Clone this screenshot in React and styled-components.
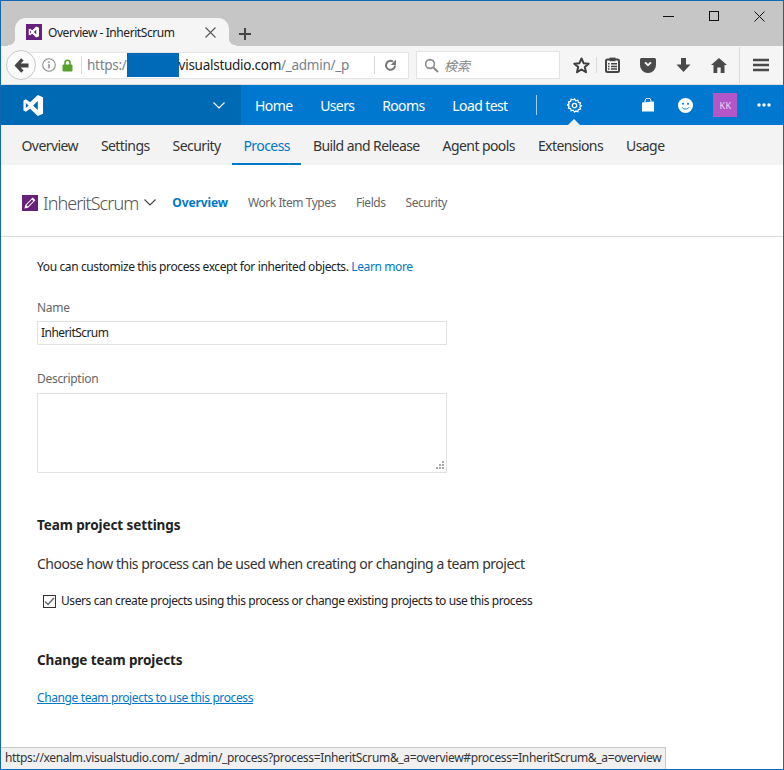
import React from "react";
import styled, { createGlobalStyle } from "styled-components";

const Global = createGlobalStyle`
  html, body { margin: 0; padding: 0; background: #fff; }
  * { box-sizing: border-box; }
`;
const FONT = `"Noto Sans", "Open Sans", sans-serif`;

const Frame = styled.div`
  position: relative; width: 784px; height: 770px; overflow: hidden;
  border: 1px solid #1168b0; background: #fff; font-family: ${FONT}; color: #333;
  display: flex; flex-direction: column;
`;
const TitleBar = styled.div`
  height: 45px; background: #c6c6c6; display: flex; align-items: flex-end; padding-left: 14px; position: relative; flex: none;
`;
const Tab = styled.div`
  position: relative; width: 214px; height: 28px; background: #f5f5f5; border-radius: 11px 11px 0 0;
  display: flex; align-items: center; padding: 0 0 0 11px; gap: 6px;
  &::before, &::after {
    content: ""; position: absolute; bottom: 0; width: 7px; height: 8px;
  }
  &::before { left: -7px; background: radial-gradient(circle at 0 0, transparent 7px, #f5f5f5 7.5px); }
  &::after { right: -7px; background: radial-gradient(circle at 100% 0, transparent 7px, #f5f5f5 7.5px); }
`;
const TabTitle = styled.span`
  font-size: 12px; letter-spacing: -0.43px; color: #222; flex: 1; white-space: nowrap;
`;
const NewTab = styled.div`
  margin: 0 0 3px 10px; width: 14px; height: 18px; display: flex; align-items: center;
`;
const WinControls = styled.div`
  position: absolute; right: 0; top: 0; height: 30px; display: flex; align-items: center; gap: 35px; padding-right: 18px;
`;
const Toolbar = styled.div`
  height: 39px; background: #f5f5f5; display: flex; align-items: center; padding-left: 5px; flex: none; border-bottom: 1px solid #dcdcdc;
`;
const BackBtn = styled.div`
  width: 30px; height: 30px; border-radius: 50%; background: #fbfbfb; border: 1px solid #c8c8c8;
  display: flex; align-items: center; justify-content: center; flex: none; z-index: 1;
`;
const UrlBar = styled.div`
  margin-left: -6px; width: 379px; height: 27px; background: #fff; border: 1px solid #e4e4e4; border-left: none;
  display: flex; align-items: center; padding-left: 12px; flex: none;
`;
const UrlDivider = styled.div`
  width: 1px; height: 18px; background: #d8d8d8; flex: none; margin: ${p => p.$m || "0"};
`;
const UrlText = styled.span`
  font-size: 13.5px; color: ${p => p.$dim ? "#7a7f8c" : "#222"}; white-space: nowrap; letter-spacing: -0.27px;
`;
const Mask = styled.span`
  display: inline-block; width: 52px; height: 24px; background: #0069b8; flex: none;
`;
const SearchBox = styled.div`
  margin-left: 7px; width: 144px; height: 28px; background: #fff; border: 1px solid #e4e4e4;
  display: flex; align-items: center; padding-left: 7px; gap: 5px; flex: none;
`;
const SearchText = styled.span`
  font-family: "Noto Sans CJK JP", sans-serif; font-style: italic; font-size: 13px; color: #888;
`;
const ToolIcons = styled.div`
  display: flex; align-items: center; flex: 1; height: 100%; padding-left: 13px; color: #4a4a4a;
`;
const ToolIcon = styled.div`
  width: ${p => p.$w}px; display: flex; justify-content: flex-start; align-items: center; flex: none;
`;
const ToolSep = styled.div`
  width: 1px; height: ${p => p.$h}px; background: #dadada; flex: none; margin-right: ${p => p.$r}px;
`;
const NavBar = styled.div`
  height: 40px; background: #0078d0; display: flex; align-items: center; flex: none; color: #fff;
`;
const Brand = styled.div`
  width: 240px; height: 100%; background: #0069b4; display: flex; align-items: center; justify-content: space-between;
  padding: 0 16px 0 22px; flex: none;
`;
const NavLinks = styled.div`
  display: flex; align-items: center; padding-left: 14px; gap: 27.7px;
`;
const NavLink = styled.a`
  font-size: 14px; letter-spacing: -0.6px; color: #fff; white-space: nowrap;
`;
const NavRight = styled.div`
  display: flex; align-items: center; height: 100%; position: relative;
`;
const NavSep = styled.div`
  width: 1px; height: 20px; background: #9fd0f0; margin-left: 28.9px;
`;
const NavIcon = styled.div`
  display: flex; align-items: center; justify-content: center; flex: none; margin-left: ${p => p.$l}px; width: ${p => p.$w}px; height: 100%; position: relative;
`;
const Caret = styled.div`
  position: absolute; bottom: 0; left: 50%; margin-left: -6px; width: 0; height: 0;
  border-left: 6px solid transparent; border-right: 6px solid transparent; border-bottom: 6px solid #f3f3f3;
`;
const Avatar = styled.div`
  width: 24px; height: 24px; background: #b455c8; color: #eadcf0; font-size: 9px; display: flex; align-items: center; justify-content: center; flex: none;
  margin-left: 18px; letter-spacing: 0.4px;
`;
const SubNav = styled.div`
  height: 40px; background: #f3f3f3; display: flex; padding-left: 9px; flex: none;
`;
const SubItem = styled.a`
  height: 40px; padding: 11px 11.5px 0; font-size: 14px; letter-spacing: -0.58px; line-height: 20px; white-space: nowrap;
  color: ${p => p.$on ? "#0078c8" : "#333"};
  border-bottom: 2px solid ${p => p.$on ? "#0078c8" : "transparent"};
`;
const ProcHeader = styled.div`
  height: 72px; border-bottom: 1px solid #dcdcdc; display: flex; align-items: center; padding: 4px 0 0 21px; flex: none;
`;
const ProcTitle = styled.span`
  font-size: 18px; font-weight: 300; letter-spacing: -0.95px; color: #555; margin-left: 5px; white-space: nowrap;
`;
const ProcLinks = styled.div`
  display: flex; align-items: center; gap: 20px; margin-left: 16px;
`;
const ProcLink = styled.a`
  font-size: 12px; letter-spacing: ${p => p.$on ? "-0.1px" : "-0.45px"}; white-space: nowrap; font-weight: ${p => p.$on ? 700 : 400}; color: ${p => p.$on ? "#0078c8" : "#666"};
`;
const Content = styled.div`
  padding: 21px 0 0 36px; display: flex; flex-direction: column; flex: 1;
`;
const Text12 = styled.p`
  margin: ${p => p.$t || 0}px 0 0; font-size: 12px; line-height: 18px; letter-spacing: -0.39px; color: #222;
`;
const CheckLabel = styled(Text12)`
  letter-spacing: -0.41px;
`;
const Link = styled.a`
  color: #0078c8; text-decoration: ${p => p.$u ? "underline" : "none"};
`;
const FieldLabel = styled.label`
  display: block; font-size: 12px; line-height: 18px; letter-spacing: -0.3px; color: #666; margin-top: ${p => p.$t}px;
`;
const TextInput = styled.div`
  margin-top: 4px; width: 410px; height: 24px; border: 1px solid #e2e2e2; font-size: 12px; letter-spacing: -0.55px; line-height: 22px; padding-left: 3px; color: #222;
`;
const TextArea = styled.div`
  margin-top: 5px; width: 410px; height: 80px; border: 1px solid #e2e2e2; position: relative;
`;
const Grip = styled.svg`
  position: absolute; right: 2px; bottom: 2px;
`;
const Heading = styled.h2`
  margin: ${p => p.$t}px 0 0; font-size: 13.5px; line-height: 20px; font-weight: 700; letter-spacing: -0.1px; color: #222;
`;
const Lead = styled.p`
  margin: 19px 0 0; font-size: 14px; line-height: 20px; letter-spacing: -0.475px; color: #333;
`;
const CheckRow = styled.div`
  display: flex; align-items: center; gap: 5px; margin: 18px 0 0 6px;
`;
const CheckBox = styled.div`
  width: 13px; height: 13px; border: 1px solid #333; display: flex; align-items: center; justify-content: center; flex: none;
`;
const StatusBar = styled.div`
  position: absolute; left: 0; bottom: 0; width: 665px; height: 22px; background: #f0f0f0; border-top: 1px solid #c8c8c8; border-right: 1px solid #c8c8c8;
  font-size: 12px; letter-spacing: -0.355px; line-height: 20px; padding-left: 4px; color: #333; white-space: nowrap; overflow: hidden;
`;

const VS_PATH = "M15.5 0L21 2.4V19.6L15.5 22L7.5 14.3L3 17.6L0.5 16.3V5.7L3 4.4L7.5 7.7ZM15.5 6.3L10.6 11L15.5 15.7ZM3 8.3V13.7L5.8 11Z";

export default function App() {
  return (
    <Frame>
      <Global />
      <TitleBar>
        <Tab>
          <svg width="16" height="16" viewBox="0 0 16 16" style={{ flex: "none" }}>
            <rect width="16" height="16" fill="#68217a" />
            <g transform="translate(2.5 2.5) scale(0.5)"><path fillRule="evenodd" fill="#fff" d={VS_PATH} /></g>
          </svg>
          <TabTitle>Overview - InheritScrum</TabTitle>
          <svg width="11" height="11" viewBox="0 0 11 11" style={{ marginRight: 13, flex: "none" }}><path d="M0.5 0.5L10.5 10.5M10.5 0.5L0.5 10.5" stroke="#555" strokeWidth="1.1" /></svg>
        </Tab>
        <NewTab>
          <svg width="12" height="12" viewBox="0 0 12 12"><path d="M6 0V12M0 6H12" stroke="#444" strokeWidth="2" /></svg>
        </NewTab>
        <WinControls>
          <svg width="11" height="10" viewBox="0 0 11 10"><path d="M0 5.5H11" stroke="#111" strokeWidth="1" /></svg>
          <svg width="10" height="10" viewBox="0 0 10 10"><rect x="0.5" y="0.5" width="9" height="9" fill="none" stroke="#111" strokeWidth="1" /></svg>
          <svg width="11" height="11" viewBox="0 0 11 11"><path d="M0.5 0.5L10.5 10.5M10.5 0.5L0.5 10.5" stroke="#111" strokeWidth="1" /></svg>
        </WinControls>
      </TitleBar>
      <Toolbar>
        <BackBtn>
          <svg width="15" height="15" viewBox="0 0 15 15"><path d="M7.2 0.3L0.5 7.5L7.2 14.7L9.6 12.6L6.7 9.4H14.5V5.6H6.7L9.6 2.4Z" fill="#454545" /></svg>
        </BackBtn>
        <UrlBar>
          <svg width="14" height="14" viewBox="0 0 14 14" style={{ flex: "none" }}>
            <circle cx="7" cy="7" r="6.3" fill="none" stroke="#8a8a8a" strokeWidth="1.1" />
            <path d="M7 6V10.5M7 3.2V5" stroke="#8a8a8a" strokeWidth="1.4" />
          </svg>
          <svg width="11" height="13" viewBox="0 0 11 13" style={{ marginLeft: 6, flex: "none" }}>
            <path d="M3 6V3.8a2.5 2.5 0 0 1 5 0V6" fill="none" stroke="#57a12c" strokeWidth="1.6" />
            <rect x="0.5" y="5.5" width="10" height="7" rx="1" fill="#57a12c" />
          </svg>
          <UrlDivider $m="0 5px 0 8px" />
          <UrlText $dim>https:/</UrlText>
          <Mask />
          <UrlText>visualstudio.com</UrlText>
          <UrlText $dim>/_admin/_p</UrlText>
          <UrlDivider $m="0 0 0 25px" />
          <svg width="13" height="13" viewBox="0 0 13 13" style={{ marginLeft: 9, flex: "none" }}>
            <path d="M11 6.5A4.5 4.5 0 1 1 9 2.6" fill="none" stroke="#777" strokeWidth="2" />
            <path d="M12 0.5V6H6.8Z" fill="#777" />
          </svg>
        </UrlBar>
        <SearchBox>
          <svg width="15" height="15" viewBox="0 0 15 15"><circle cx="6" cy="6" r="4.4" fill="none" stroke="#8a8a8a" strokeWidth="1.6" /><path d="M9.5 9.5L14 14" stroke="#8a8a8a" strokeWidth="2" /></svg>
          <SearchText>検索</SearchText>
        </SearchBox>
        <ToolIcons>
          <ToolIcon $w={23}>
            <svg width="17" height="17" viewBox="0 0 17 17"><path d="M8.5 1.5L10.6 6.2L15.7 6.7L11.8 10.1L13 15.2L8.5 12.5L4 15.2L5.2 10.1L1.3 6.7L6.4 6.2Z" fill="none" stroke="#3e3e3e" strokeWidth="2" strokeLinejoin="round" /></svg>
          </ToolIcon>
          <ToolSep $h={16} $r={8} />
          <ToolIcon $w={35}>
            <svg width="15" height="16" viewBox="0 0 15 16"><rect x="1" y="2.6" width="13" height="12.4" rx="1.5" fill="none" stroke="#454545" strokeWidth="2" /><path d="M4.5 0.6H10.5V4.2H4.5Z" fill="#454545" /><path d="M3 6.8H4.5M6 6.8H12M3 9.4H4.5M6 9.4H12M3 12H4.5M6 12H12" stroke="#454545" strokeWidth="1.5" /></svg>
          </ToolIcon>
          <ToolIcon $w={36}>
            <svg width="16" height="15" viewBox="0 0 16 15"><path fillRule="evenodd" fill="#4a4a4a" d="M1.5 0H14.5A1.5 1.5 0 0 1 16 1.5V7A8 8 0 0 1 0 7V1.5A1.5 1.5 0 0 1 1.5 0ZM4.3 5L8 8.6L11.7 5L10.2 3.8L8 6L5.8 3.8Z" /></svg>
          </ToolIcon>
          <ToolIcon $w={35}>
            <svg width="15" height="15" viewBox="0 0 15 15"><path d="M5 0H10V6.5H14.5L7.5 14L0.5 6.5H5Z" fill="#4a4a4a" /></svg>
          </ToolIcon>
          <ToolIcon $w={28}>
            <svg width="16" height="15" viewBox="0 0 16 15"><path fill="#4a4a4a" d="M8 0L16 7H13.5V15H9.7V9.5H6.3V15H2.5V7H0Z" /></svg>
          </ToolIcon>
          <ToolSep $h={36} $r={13} />
          <svg width="16" height="14" viewBox="0 0 16 14"><path d="M0 2H16M0 7H16M0 12H16" stroke="#4a4a4a" strokeWidth="2.6" /></svg>
        </ToolIcons>
      </Toolbar>
      <NavBar>
        <Brand>
          <svg width="21" height="21" viewBox="0 0 22 22"><path fillRule="evenodd" fill="#fff" d={VS_PATH} /></svg>
          <svg width="12" height="7" viewBox="0 0 12 7"><path d="M0.5 0.5L6 6L11.5 0.5" fill="none" stroke="#fff" strokeWidth="1.1" /></svg>
        </Brand>
        <NavLinks>
          <NavLink>Home</NavLink>
          <NavLink>Users</NavLink>
          <NavLink>Rooms</NavLink>
          <NavLink>Load test</NavLink>
        </NavLinks>
        <NavRight>
          <NavSep />
          <NavIcon $l={27} $w={20}>
            <svg width="15" height="15" viewBox="0 0 24 24" fill="none" stroke="#fff" strokeWidth="2"><circle cx="12" cy="12" r="3.5" /><path d="M12 1.5l2 3 3.4-1 .8 3.5 3.4.8-1 3.2 2.9 1.5-2.9 2 1 3.2-3.4.8-.8 3.4-3.4-1L12 22.5l-2-3.1-3.4 1-.8-3.4-3.4-.8 1-3.2L.5 11l2.9-1.5-1-3.2 3.4-.8.8-3.5 3.4 1Z" /></svg>
            <Caret />
          </NavIcon>
          <NavIcon $l={54} $w={20}>
            <svg width="14" height="14" viewBox="0 0 14 14"><path d="M4 4V3a3 3 0 0 1 6 0V4" fill="none" stroke="#fff" strokeWidth="1" /><path d="M1 4.5L13 3.5V13.5H1Z" fill="#fff" /></svg>
          </NavIcon>
          <NavIcon $l={17} $w={20}>
            <svg width="15" height="15" viewBox="0 0 15 15"><circle cx="7.5" cy="7.5" r="7.5" fill="#fff" /><circle cx="5" cy="5.8" r="1" fill="#0078d0" /><circle cx="10" cy="5.8" r="1" fill="#0078d0" /><path d="M4 9.3C5.5 11.6 9.5 11.6 11 9.3" fill="none" stroke="#0078d0" strokeWidth="1" /></svg>
          </NavIcon>
          <Avatar>KK</Avatar>
          <NavIcon $l={18} $w={18}>
            <svg width="14" height="4" viewBox="0 0 14 4"><circle cx="2" cy="2" r="1.7" fill="#fff" /><circle cx="7" cy="2" r="1.7" fill="#fff" /><circle cx="12" cy="2" r="1.7" fill="#fff" /></svg>
          </NavIcon>
        </NavRight>
      </NavBar>
      <SubNav>
        <SubItem>Overview</SubItem>
        <SubItem>Settings</SubItem>
        <SubItem>Security</SubItem>
        <SubItem $on>Process</SubItem>
        <SubItem>Build and Release</SubItem>
        <SubItem>Agent pools</SubItem>
        <SubItem>Extensions</SubItem>
        <SubItem>Usage</SubItem>
      </SubNav>
      <ProcHeader>
        <svg width="16" height="16" viewBox="0 0 16 16" style={{ flex: "none" }}>
          <rect width="16" height="16" fill="#68217a" />
          <path d="M2.5 13.5L3.3 10L10.7 2.6L13.4 5.3L6 12.7Z" fill="#fff" />
          <path d="M4.4 10.2L5.8 11.6L11.4 6L10 4.6Z" fill="#68217a" />
        </svg>
        <ProcTitle>InheritScrum</ProcTitle>
        <svg width="12" height="7" viewBox="0 0 12 7" style={{ marginLeft: 6, flex: "none" }}><path d="M0.5 0.5L6 6L11.5 0.5" fill="none" stroke="#444" strokeWidth="1.1" /></svg>
        <ProcLinks>
          <ProcLink $on>Overview</ProcLink>
          <ProcLink>Work Item Types</ProcLink>
          <ProcLink>Fields</ProcLink>
          <ProcLink>Security</ProcLink>
        </ProcLinks>
      </ProcHeader>
      <Content>
        <Text12>You can customize this process except for inherited objects. <Link>Learn more</Link></Text12>
        <FieldLabel $t={23}>Name</FieldLabel>
        <TextInput>InheritScrum</TextInput>
        <FieldLabel $t={25}>Description</FieldLabel>
        <TextArea>
          <Grip width="9" height="9" viewBox="0 0 9 9"><path d="M7 0h2v2H7zM4 3h2v2H4zM7 3h2v2H7zM1 6h2v2H1zM4 6h2v2H4zM7 6h2v2H7z" fill="#aaa" /></Grip>
        </TextArea>
        <Heading $t={42}>Team project settings</Heading>
        <Lead>Choose how this process can be used when creating or changing a team project</Lead>
        <CheckRow>
          <CheckBox>
            <svg width="11" height="9" viewBox="0 0 11 9"><path d="M1 4.5L4 7.5L10 1" fill="none" stroke="#666" strokeWidth="1.5" /></svg>
          </CheckBox>
          <CheckLabel as="span">Users can create projects using this process or change existing projects to use this process</CheckLabel>
        </CheckRow>
        <Heading $t={40}>Change team projects</Heading>
        <Text12 $t={19}><Link $u>Change team projects to use this process</Link></Text12>
      </Content>
      <StatusBar>https://xenalm.visualstudio.com/_admin/_process?process=InheritScrum&amp;_a=overview#process=InheritScrum&amp;_a=overview</StatusBar>
    </Frame>
  );
}
